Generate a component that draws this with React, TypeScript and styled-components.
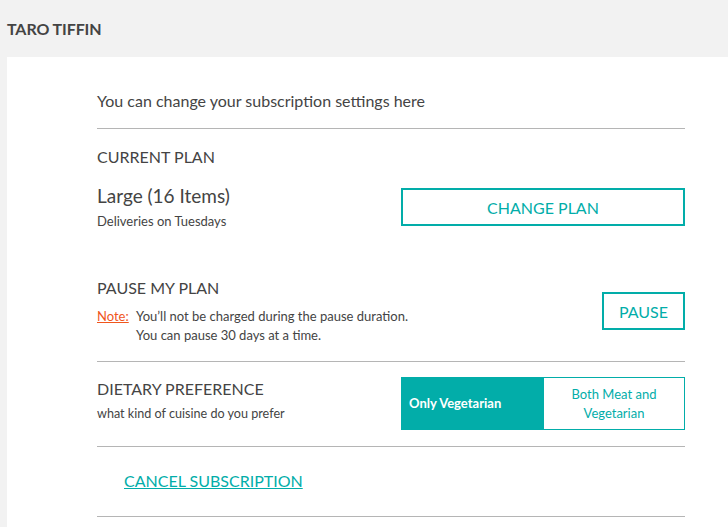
import React from "react";
import styled, { createGlobalStyle } from "styled-components";

const teal = "#02ada9";

const Global = createGlobalStyle`
  html, body { margin: 0; padding: 0; background: #f2f2f2; }
  body { font-family: Lato, "Open Sans", sans-serif; color: #444; }
`;

const Page = styled.div`
  min-height: 527px;
  display: flex;
  flex-direction: column;
`;

const Header = styled.header`
  height: 57px;
  display: flex;
  align-items: center;
  padding-left: 7px;
  font-weight: 700;
  font-size: 16px;
  color: #444;
  letter-spacing: -0.1px;
`;

const Panel = styled.main`
  flex: 1;
  margin-left: 7px;
  background: #fff;
  padding: 33px 43px 0 90px;
`;

const Intro = styled.p`
  margin: 0;
  font-size: 16px;
  line-height: 22px;
  padding-bottom: 16px;
  color: #444;
`;

const Divider = styled.hr`
  border: 0;
  height: 1px;
  background: #b5b5b5;
  margin: 0;
`;

const Section = styled.section<{ $pt: number; $pb: number }>`
  display: flex;
  justify-content: space-between;
  align-items: flex-start;
  padding: ${(p) => p.$pt}px 0 ${(p) => p.$pb}px;
`;

const Col = styled.div<{ $mt?: number }>`
  display: flex;
  flex-direction: column;
  margin-top: ${(p) => p.$mt ?? 0}px;
`;

const Title = styled.h2`
  margin: 0;
  font-weight: 400;
  font-size: 16px;
  line-height: 20px;
  text-transform: uppercase;
  color: #444;
`;

const PlanName = styled.div`
  font-size: 19px;
  line-height: 24px;
  margin-top: 17px;
`;

const Small = styled.div<{ $mt?: number; $size?: number }>`
  font-size: ${(p) => p.$size ?? 13}px;
  line-height: 19px;
  margin-top: ${(p) => p.$mt ?? 0}px;
`;

const OutlineButton = styled.button<{ $w: number; $mt: number }>`
  width: ${(p) => p.$w}px;
  height: 38px;
  margin-top: ${(p) => p.$mt}px;
  border: 2px solid ${teal};
  background: #fff;
  color: ${teal};
  font-family: Lato, sans-serif;
  font-size: 16px;
  text-transform: uppercase;
  padding: 0;
  cursor: pointer;
`;

const NoteRow = styled.div`
  display: grid;
  grid-template-columns: 39px auto;
  font-size: 13px;
  line-height: 19px;
  margin-top: 9px;
`;

const NoteLabel = styled.span`
  color: #f0561d;
  text-decoration: underline;
`;

const Toggle = styled.div`
  width: 284px;
  height: 53px;
  box-sizing: border-box;
  border: 1px solid ${teal};
  display: grid;
  grid-template-columns: 142px 1fr;
`;

const ToggleOption = styled.button<{ $active?: boolean }>`
  border: 0;
  margin: 0;
  font-family: Lato, sans-serif;
  font-size: 13px;
  line-height: 19px;
  font-weight: ${(p) => (p.$active ? 700 : 400)};
  background: ${(p) => (p.$active ? teal : "#fff")};
  color: ${(p) => (p.$active ? "#fff" : teal)};
  text-align: ${(p) => (p.$active ? "left" : "center")};
  padding: 0 10px 0 ${(p) => (p.$active ? "7px" : "10px")};
`;

const CancelRow = styled.div`
  padding: 24px 0 25px 27px;
  line-height: 20px;
`;

const CancelLink = styled.a`
  color: ${teal};
  font-size: 16px;
  line-height: 20px;
  text-decoration: underline;
  text-transform: uppercase;
  cursor: pointer;
`;

export default function App() {
  return (
    <Page>
      <Global />
      <Header>TARO TIFFIN</Header>
      <Panel>
        <Intro>You can change your subscription settings here</Intro>
        <Divider />
        <Section $pt={18} $pb={0}>
          <Col>
            <Title>Current Plan</Title>
            <PlanName>Large (16 Items)</PlanName>
            <Small $mt={4}>Deliveries on Tuesdays</Small>
          </Col>
          <OutlineButton $w={284} $mt={41}>
            Change Plan
          </OutlineButton>
        </Section>
        <Section $pt={47} $pb={16}>
          <Col>
            <Title>Pause my plan</Title>
            <NoteRow>
              <NoteLabel>Note:</NoteLabel>
              <span>
                You’ll not be charged during the pause duration.
                <br />
                You can pause 30 days at a time.
              </span>
            </NoteRow>
          </Col>
          <OutlineButton $w={83} $mt={14}>
            Pause
          </OutlineButton>
        </Section>
        <Divider />
        <Section $pt={15} $pb={16}>
          <Col $mt={2}>
            <Title>Dietary Preference</Title>
            <Small $mt={5} $size={12.6}>
              what kind of cuisine do you prefer
            </Small>
          </Col>
          <Toggle>
            <ToggleOption $active>Only Vegetarian</ToggleOption>
            <ToggleOption>
              Both Meat and
              <br />
              Vegetarian
            </ToggleOption>
          </Toggle>
        </Section>
        <Divider />
        <CancelRow>
          <CancelLink>Cancel Subscription</CancelLink>
        </CancelRow>
        <Divider />
      </Panel>
    </Page>
  );
}
